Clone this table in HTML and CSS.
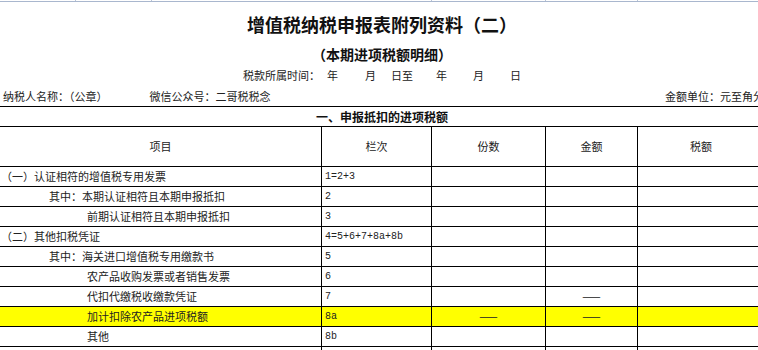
FILE: index.html
```html
<!DOCTYPE html>
<html lang="zh-CN">
<head>
<meta charset="utf-8">
<title>增值税纳税申报表附列资料（二）</title>
<link rel="stylesheet" href="styles.css">
</head>
<body>
<div class="sheet">
  <div class="ruler">
    <span class="tick t1"></span>
    <span class="tick t2"></span>
    <span class="tick t3"></span>
    <span class="tick t4"></span>
    <span class="tick t5"></span>
    <span class="tick t6"></span>
  </div>
  <h1 class="title">增值税纳税申报表附列资料（二）</h1>
  <div class="subtitle">（本期进项税额明细）</div>
  <div class="period">
    <span class="p-label">税款所属时间：</span><span class="p1">年</span><span class="p2">月</span><span class="p3">日至</span><span class="p4">年</span><span class="p5">月</span><span class="p6">日</span>
  </div>
  <div class="info">
    <span class="taxpayer">纳税人名称：（公章）</span>
    <span class="wechat">微信公众号：二哥税税念</span>
    <span class="unit">金额单位：元至角分</span>
  </div>
  <div class="table">
    <div class="section">一、申报抵扣的进项税额</div>
    <div class="row head">
      <div class="c center">项目</div>
      <div class="c center">栏次</div>
      <div class="c center">份数</div>
      <div class="c center">金额</div>
      <div class="c center">税额</div>
    </div>
    <div class="row">
      <div class="c">（一）认证相符的增值税专用发票</div>
      <div class="c num">1=2+3</div>
      <div class="c"></div><div class="c"></div><div class="c"></div>
    </div>
    <div class="row">
      <div class="c ind1">其中：本期认证相符且本期申报抵扣</div>
      <div class="c num">2</div>
      <div class="c"></div><div class="c"></div><div class="c"></div>
    </div>
    <div class="row">
      <div class="c ind2">前期认证相符且本期申报抵扣</div>
      <div class="c num">3</div>
      <div class="c"></div><div class="c"></div><div class="c"></div>
    </div>
    <div class="row">
      <div class="c">（二）其他扣税凭证</div>
      <div class="c num">4=5+6+7+8a+8b</div>
      <div class="c"></div><div class="c"></div><div class="c"></div>
    </div>
    <div class="row">
      <div class="c ind1">其中：海关进口增值税专用缴款书</div>
      <div class="c num">5</div>
      <div class="c"></div><div class="c"></div><div class="c"></div>
    </div>
    <div class="row">
      <div class="c ind2">农产品收购发票或者销售发票</div>
      <div class="c num">6</div>
      <div class="c"></div><div class="c"></div><div class="c"></div>
    </div>
    <div class="row">
      <div class="c ind2">代扣代缴税收缴款凭证</div>
      <div class="c num">7</div>
      <div class="c"></div>
      <div class="c center">——</div>
      <div class="c"></div>
    </div>
    <div class="row hl">
      <div class="c ind2">加计扣除农产品进项税额</div>
      <div class="c num">8a</div>
      <div class="c center">——</div>
      <div class="c center">——</div>
      <div class="c"></div>
    </div>
    <div class="row">
      <div class="c ind2">其他</div>
      <div class="c num">8b</div>
      <div class="c"></div><div class="c"></div><div class="c"></div>
    </div>
    <div class="row">
      <div class="c"></div>
      <div class="c num"></div>
      <div class="c"></div><div class="c"></div><div class="c"></div>
    </div>
  </div>
</div>
</body>
</html>
```

FILE: styles.css
```css
html, body {
  margin: 0;
  padding: 0;
  background: #ffffff;
  overflow: hidden;
}

body {
  font-family: "Noto Sans CJK SC", "Noto Sans", sans-serif;
  color: #222222;
  font-size: 11px;
}

.sheet {
  width: 764px;
}

.ruler {
  display: flex;
  height: 2px;
  border-bottom: 1px solid #a9b7ce;
  box-sizing: border-box;
}

.tick {
  border-right: 1px solid #b9c5d8;
  box-sizing: border-box;
}

.t1 { width: 76px; }
.t2 { width: 76px; }
.t3 { width: 280px; }
.t4 { width: 114px; }
.t5 { width: 92px; }
.t6 { flex: 1; border-right: none; }

.title {
  margin: 0;
  height: 44px;
  line-height: 44px;
  font-size: 18px;
  font-weight: bold;
  text-align: center;
  color: #111111;
}

.subtitle {
  height: 17px;
  line-height: 17px;
  font-size: 14px;
  font-weight: bold;
  text-align: center;
  color: #111111;
}

.period {
  height: 24px;
  line-height: 24px;
  padding-left: 243px;
  display: flex;
  white-space: nowrap;
}

.p1 { margin-left: 7px; }
.p2 { margin-left: 27px; }
.p3 { margin-left: 15px; }
.p4 { margin-left: 23px; }
.p5 { margin-left: 26px; }
.p6 { margin-left: 26px; }

.info {
  height: 19px;
  line-height: 19px;
  display: flex;
  white-space: nowrap;
}

.taxpayer { margin-left: 3px; }
.wechat { margin-left: 42px; }
.unit { margin-left: auto; }

.table {
  width: 764px;
}

.section {
  height: 21px;
  line-height: 19px;
  border-top: 1px solid #000;
  border-bottom: 1px solid #000;
  box-sizing: border-box;
  text-align: center;
  font-size: 12px;
  font-weight: bold;
  color: #111111;
}

.row {
  display: grid;
  grid-template-columns: 322px 110px 114px 92px 1fr;
  height: 20px;
  border-bottom: 1px solid #000;
  box-sizing: border-box;
}

.row.head {
  height: 40px;
}

.row.hl {
  background: #ffff00;
}

.c {
  border-right: 1px solid #000;
  box-sizing: border-box;
  padding-left: 1px;
  line-height: 19px;
  white-space: nowrap;
  overflow: hidden;
}

.c:last-child {
  border-right: none;
}

.head .c {
  line-height: 39px;
}

.center {
  text-align: center;
  padding-left: 0;
}

.num {
  font-family: "Liberation Mono", monospace;
  font-size: 10px;
  padding-left: 3px;
  line-height: 20px;
}

.ind1 { padding-left: 49px; }
.ind2 { padding-left: 87px; }
```
